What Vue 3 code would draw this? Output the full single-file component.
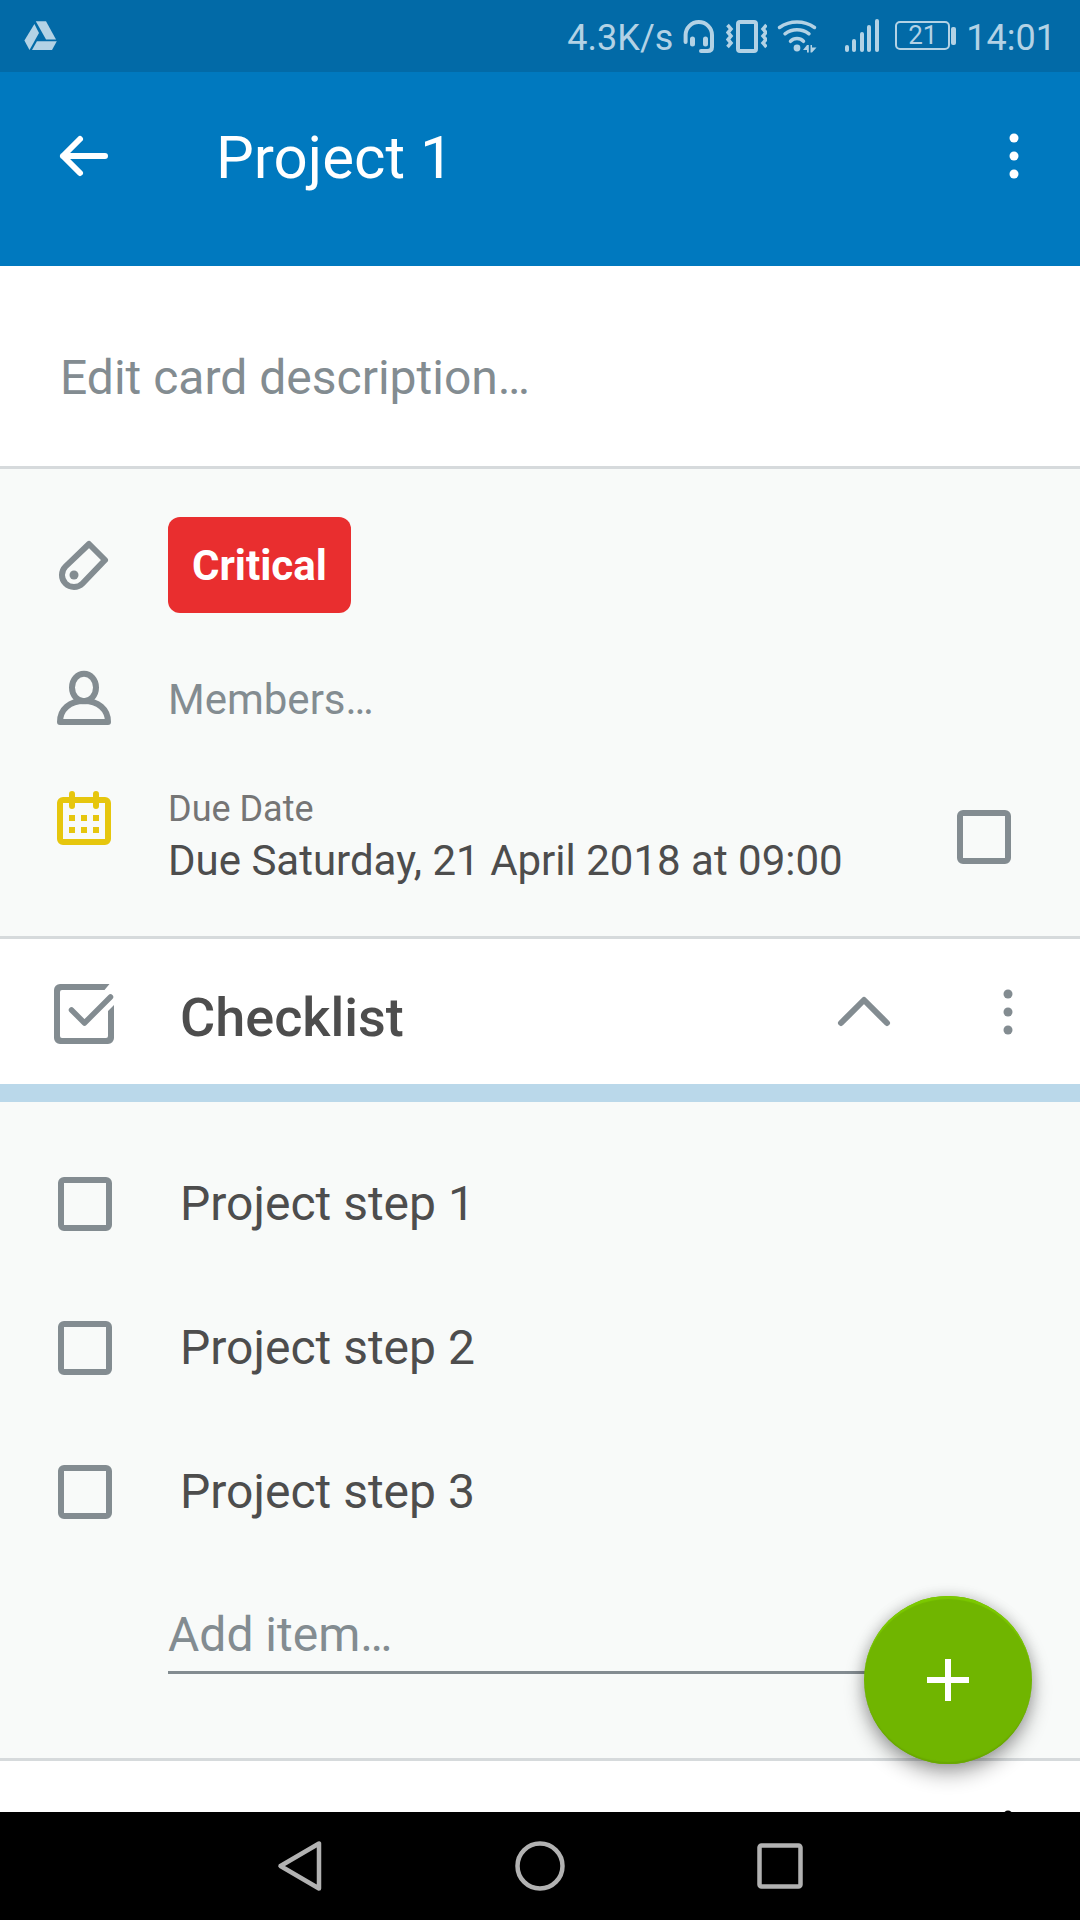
<script setup>
import { ref } from 'vue'

const description = ref('')
const newItem = ref('')
const dueDone = ref(false)
const expanded = ref(true)
const items = ref([
  { id: 1, text: 'Project step 1', done: false },
  { id: 2, text: 'Project step 2', done: false },
  { id: 3, text: 'Project step 3', done: false },
])
const signalBars = [
  { x: 3, top: 29 },
  { x: 10, top: 23 },
  { x: 18, top: 16 },
  { x: 25, top: 9 },
  { x: 33, top: 3 },
]

function addItem() {
  const text = newItem.value.trim()
  if (!text) return
  items.value.push({ id: items.value.length + 1, text, done: false })
  newItem.value = ''
}
</script>

<template>
  <div class="screen">
    <div class="status-bar">
      <svg class="drive" width="34" height="40" viewBox="0 0 34 40" fill="currentColor" aria-hidden="true">
        <path d="M10.4 6 L15 15 L5.5 32 L.4 22.5 Z" />
        <path d="M11.8 3.3 H22 L32 21.5 H22 Z" />
        <path d="M12.9 23.3 H32.8 L28 32 H8 Z" />
      </svg>
      <span>4.3K/s</span>
      <svg width="33" height="40" viewBox="0 0 33 40" fill="none" stroke="currentColor" stroke-width="4" stroke-linecap="round" aria-hidden="true">
        <path d="M2.6 24 V17 A13.2 13 0 0 1 29 17 V29 Q29 33 24.5 33 H18" />
        <path d="M9.5 21 V26 M22.5 21 V26" stroke-width="5" />
      </svg>
      <svg width="41" height="40" viewBox="0 0 41 40" fill="none" stroke="currentColor" stroke-width="4" aria-hidden="true">
        <rect x="12" y="4" width="18" height="29" rx="2" />
        <path d="M1.500 7 L5 11 L2 14.500 L5 18 L2 21.500 L5 25 L1.500 29 M40.500 7 L37 11 L40 14.500 L37 18 L40 21.500 L37 25 L40.500 29" stroke-width="3.500" />
      </svg>
      <svg width="57" height="40" viewBox="0 0 57 40" fill="none" stroke="currentColor" stroke-width="3.500" stroke-linecap="round" aria-hidden="true">
        <path d="M2.500 9.500 A31 31 0 0 1 37.500 9.500 M8 15.800 A19.600 19.600 0 0 1 32 15.800 M13.500 23.300 A9 9 0 0 1 26.500 23.300" />
        <circle cx="20" cy="30" r="3.400" fill="currentColor" stroke="none" />
        <path d="M26 32 L30 27 H31.800 V34.500 H30 V32 Z M33.500 27 H35 V29.500 H39.500 L35 34.500 H33.500 Z" fill="currentColor" stroke="none" />
      </svg>
      <svg width="41" height="40" viewBox="0 0 41 40" stroke="currentColor" stroke-width="4" stroke-linecap="round" aria-hidden="true">
        <path v-for="bar in signalBars" :key="bar.x" :d="`M${bar.x} ${bar.top} V32`" />
      </svg>
      <div class="battery"><span class="battery-level">21</span></div>
      <time>14:01</time>
    </div>

    <header class="toolbar">
      <button class="back" type="button" aria-label="Back">
        <svg width="60" height="72" viewBox="0 0 60 72" fill="none" stroke="currentColor" stroke-width="6" stroke-linecap="round" stroke-linejoin="round">
          <path d="M51 36 H9 M26 19 L9 36 L26 53" />
        </svg>
      </button>
      <h1>Project 1</h1>
      <button type="button" aria-label="More options">
        <svg width="72" height="72" viewBox="0 0 72 72" fill="currentColor">
          <circle cx="36" cy="18" r="4.500" /><circle cx="36" cy="36" r="4.500" /><circle cx="36" cy="54" r="4.500" />
        </svg>
      </button>
    </header>

    <div class="body">
      <main>
        <section class="description">
          <input v-model="description" type="text" placeholder="Edit card description…" aria-label="Card description" />
        </section>

        <section class="details">
          <div class="row">
            <svg width="60" height="60" viewBox="0 0 60 60" fill="none" stroke="currentColor" stroke-width="6" stroke-linejoin="round" aria-hidden="true">
              <path d="M35 9 L51 25 L28.500 48.500 A12 12 0 0 1 11.500 31.500 Z" />
              <circle cx="20" cy="40" r="4.500" fill="currentColor" stroke="none" />
            </svg>
            <button class="label" type="button">Critical</button>
          </div>
          <div class="row">
            <svg width="60" height="60" viewBox="0 0 60 60" fill="none" stroke="currentColor" stroke-width="6" stroke-linejoin="round" aria-hidden="true">
              <ellipse cx="30" cy="18.500" rx="12" ry="13.700" />
              <path d="M6 53 C6 40 16 32 30 32 S54 40 54 53 Z" />
            </svg>
            <button class="members" type="button">Members…</button>
          </div>
          <div class="row due">
            <svg class="calendar" width="60" height="60" viewBox="0 0 60 60" fill="none" stroke="currentColor" stroke-width="6" aria-hidden="true">
              <rect x="6" y="15" width="48" height="42" rx="3" />
              <path d="M18 9 V21 M42 9 V21" stroke-linecap="round" />
              <path d="M15 33 H21 M27 33 H33 M39 33 H45 M15 45 H21 M27 45 H33 M39 45 H45" />
            </svg>
            <label class="due-text" for="due-done">
              <span class="due-caption">Due Date</span>
              <span class="due-value">Due Saturday, 21 April 2018 at 09:00</span>
            </label>
            <input id="due-done" v-model="dueDone" class="check" type="checkbox" />
          </div>
        </section>

        <section>
          <div class="section-head">
            <svg width="60" height="65" viewBox="0 0 60 65" aria-hidden="true">
              <path fill="currentColor" d="M6 5 H55.500 L50.500 11 H8 a2 2 0 0 0 -2 2 V57 a2 2 0 0 0 2 2 H52 a2 2 0 0 0 2 -2 V32 L60 26 V59 a6 6 0 0 1 -6 6 H6 a6 6 0 0 1 -6 -6 V11 a6 6 0 0 1 6 -6 Z" />
              <path fill="none" stroke="currentColor" stroke-width="5.500" stroke-linecap="round" stroke-linejoin="round" d="M17.500 31 L30.500 44 L56.500 18" />
            </svg>
            <h2>Checklist</h2>
            <button type="button" aria-label="Collapse checklist" :aria-expanded="expanded" @click="expanded = !expanded">
              <svg width="72" height="72" viewBox="0 0 72 72" fill="none" stroke="currentColor" stroke-width="6" stroke-linecap="round" stroke-linejoin="round">
                <path d="M13 47 L36 24 L59 47" />
              </svg>
            </button>
            <button type="button" aria-label="Checklist options">
              <svg width="72" height="72" viewBox="0 0 72 72" fill="currentColor">
                <circle cx="36" cy="18" r="4.500" /><circle cx="36" cy="36" r="4.500" /><circle cx="36" cy="54" r="4.500" />
              </svg>
            </button>
          </div>
          <div class="progress" role="progressbar" aria-label="Checklist progress" aria-valuenow="0" aria-valuemin="0" aria-valuemax="100"></div>
          <div v-if="expanded" class="items">
            <label v-for="item in items" :key="item.id" class="item">
              <input v-model="item.done" class="check" type="checkbox" />
              <span>{{ item.text }}</span>
            </label>
            <div class="add">
              <input v-model="newItem" type="text" placeholder="Add item…" aria-label="Add item" @keyup.enter="addItem" />
            </div>
          </div>
        </section>

        <section class="activity">
          <button type="button" aria-label="Activity options">
            <svg width="72" height="72" viewBox="0 0 72 72" fill="currentColor">
              <circle cx="36" cy="18" r="4.500" /><circle cx="36" cy="36" r="4.500" /><circle cx="36" cy="54" r="4.500" />
            </svg>
          </button>
        </section>
      </main>

      <button class="fab" type="button" aria-label="Add">
        <svg width="42" height="42" viewBox="0 0 42 42" stroke="currentColor" stroke-width="6">
          <path d="M21 0 V42 M0 21 H42" />
        </svg>
      </button>
    </div>

    <nav class="nav-bar" aria-label="System">
      <button type="button" aria-label="Back">
        <svg width="60" height="60" viewBox="0 0 60 60" fill="none" stroke="currentColor" stroke-width="4.500" stroke-linejoin="round">
          <path d="M49 7.500 V52.500 L10.500 30 Z" />
        </svg>
      </button>
      <button type="button" aria-label="Home">
        <svg width="60" height="60" viewBox="0 0 60 60" fill="none" stroke="currentColor" stroke-width="4.500">
          <circle cx="30" cy="30" r="22.500" />
        </svg>
      </button>
      <button type="button" aria-label="Recent apps">
        <svg width="60" height="60" viewBox="0 0 60 60" fill="none" stroke="currentColor" stroke-width="4.500">
          <rect x="9.500" y="9.500" width="41" height="41" rx="2" />
        </svg>
      </button>
    </nav>
  </div>
</template>

<style>
body {
  margin: 0;
}
</style>

<style scoped>
.screen {
  display: flex;
  flex-direction: column;
  height: 100vh;
  overflow: hidden;
  background: #fff;
  color: #4d4d4d;
  font-family: Roboto, "Noto Sans", sans-serif;
}

.screen * {
  box-sizing: border-box;
}

svg {
  display: block;
  flex: none;
}

button {
  margin: 0;
  padding: 0;
  border: 0;
  background: none;
  color: inherit;
  font: inherit;
  cursor: pointer;
}

input {
  margin: 0;
  font-family: inherit;
  outline: none;
}

input::placeholder {
  color: #838c91;
  opacity: 1;
}

.status-bar {
  display: flex;
  flex: none;
  align-items: center;
  gap: 10px;
  height: 72px;
  padding: 4px 24px 0;
  background: #026aa7;
  color: #b3d2e5;
  font-size: 36px;
  line-height: 42px;
}

.drive {
  margin-right: auto;
}

.battery {
  display: flex;
  align-items: center;
  gap: 1px;
  height: 40px;
  padding-bottom: 5px;
}

.battery::after {
  content: "";
  width: 5px;
  height: 18px;
  border-radius: 2px;
  background: currentColor;
}

.battery-level {
  width: 55px;
  border: 2px solid currentColor;
  border-radius: 5px;
  font-size: 26px;
  line-height: 25px;
  text-align: center;
}

.toolbar {
  display: flex;
  flex: none;
  align-items: flex-start;
  padding: 48px 30px 74px 54px;
  background: #0079bf;
  color: #fff;
}

.toolbar h1 {
  flex: 1;
  margin: 0 0 0 102px;
  font-size: 60px;
  font-weight: 400;
  line-height: 76px;
  height: 72px;
}

.body {
  position: relative;
  display: flex;
  flex: 1;
  min-height: 0;
}

main {
  flex: 1;
  min-width: 0;
  overflow-y: auto;
  scrollbar-width: none;
}

.description {
  padding: 84px 60px 60px;
  border-bottom: 3px solid #d6dadc;
}

.description input {
  display: block;
  width: 100%;
  height: 56px;
  padding: 0;
  border: 0;
  background: none;
  color: #4d4d4d;
  font-size: 48px;
  line-height: 56px;
}

.details {
  display: flex;
  flex-direction: column;
  gap: 38px;
  padding: 48px 69px 47px 54px;
  border-bottom: 3px solid #d6dadc;
  background: #f8faf9;
}

.row {
  display: flex;
  align-items: center;
  gap: 54px;
  min-height: 96px;
  color: #838c91;
  font-size: 42px;
}

.label {
  height: 96px;
  padding: 0 24px;
  border-radius: 12px;
  background: #e92e2f;
  color: #fff;
  font-weight: 700;
}

.calendar {
  align-self: flex-start;
  color: #e6c60d;
}

.due-text {
  display: flex;
  flex: 1;
  flex-direction: column;
}

.due-caption {
  color: #757575;
  font-size: 36px;
  line-height: 48px;
}

.due-value {
  color: #4d4d4d;
  line-height: 56px;
}

.check {
  flex: none;
  width: 54px;
  height: 54px;
  border: 6px solid #838c91;
  border-radius: 6px;
  appearance: none;
  cursor: pointer;
}

.check:checked {
  background: #838c91;
}

.section-head {
  display: flex;
  align-items: center;
  height: 145px;
  padding: 0 36px 0 54px;
  color: #838c91;
}

.section-head h2 {
  flex: 1;
  margin: 0;
  padding: 12px 0 0 66px;
  color: #4d4d4d;
  font-size: 54px;
  font-weight: 500;
}

.section-head button + button {
  margin-left: 72px;
}

.progress {
  height: 18px;
  background: #bad8ea;
}

.items {
  padding: 30px 54px 84px 58px;
  border-bottom: 3px solid #d6dadc;
  background: #f8faf9;
}

.item {
  display: flex;
  align-items: center;
  gap: 68px;
  height: 144px;
  font-size: 48px;
  line-height: 56px;
}

.add {
  padding: 42px 0 0 110px;
}

.add input {
  display: block;
  width: 100%;
  height: 68px;
  padding: 0 0 8px;
  border: 0;
  border-bottom: 3px solid #838c91;
  border-radius: 0;
  background: none;
  color: #4d4d4d;
  font-size: 48px;
}

.activity {
  display: flex;
  align-items: center;
  justify-content: flex-end;
  height: 144px;
  padding: 0 36px;
  color: #000;
}

.fab {
  position: absolute;
  right: 48px;
  bottom: 48px;
  display: flex;
  align-items: center;
  justify-content: center;
  width: 168px;
  height: 168px;
  border-radius: 50%;
  background: #70b500;
  box-shadow:
    inset 0 4px 1px -1px #7cc900,
    inset 0 -3px 1px -1px #69a800,
    0 0 14px rgba(0, 0, 0, 0.18),
    0 10px 20px rgba(0, 0, 0, 0.32);
  color: #fff;
}

.nav-bar {
  display: flex;
  flex: none;
  height: 108px;
  padding: 0 calc(100% / 6);
  background: #000;
  color: #b2b2b2;
}

.nav-bar button {
  display: flex;
  flex: 1;
  align-items: center;
  justify-content: center;
}
</style>
